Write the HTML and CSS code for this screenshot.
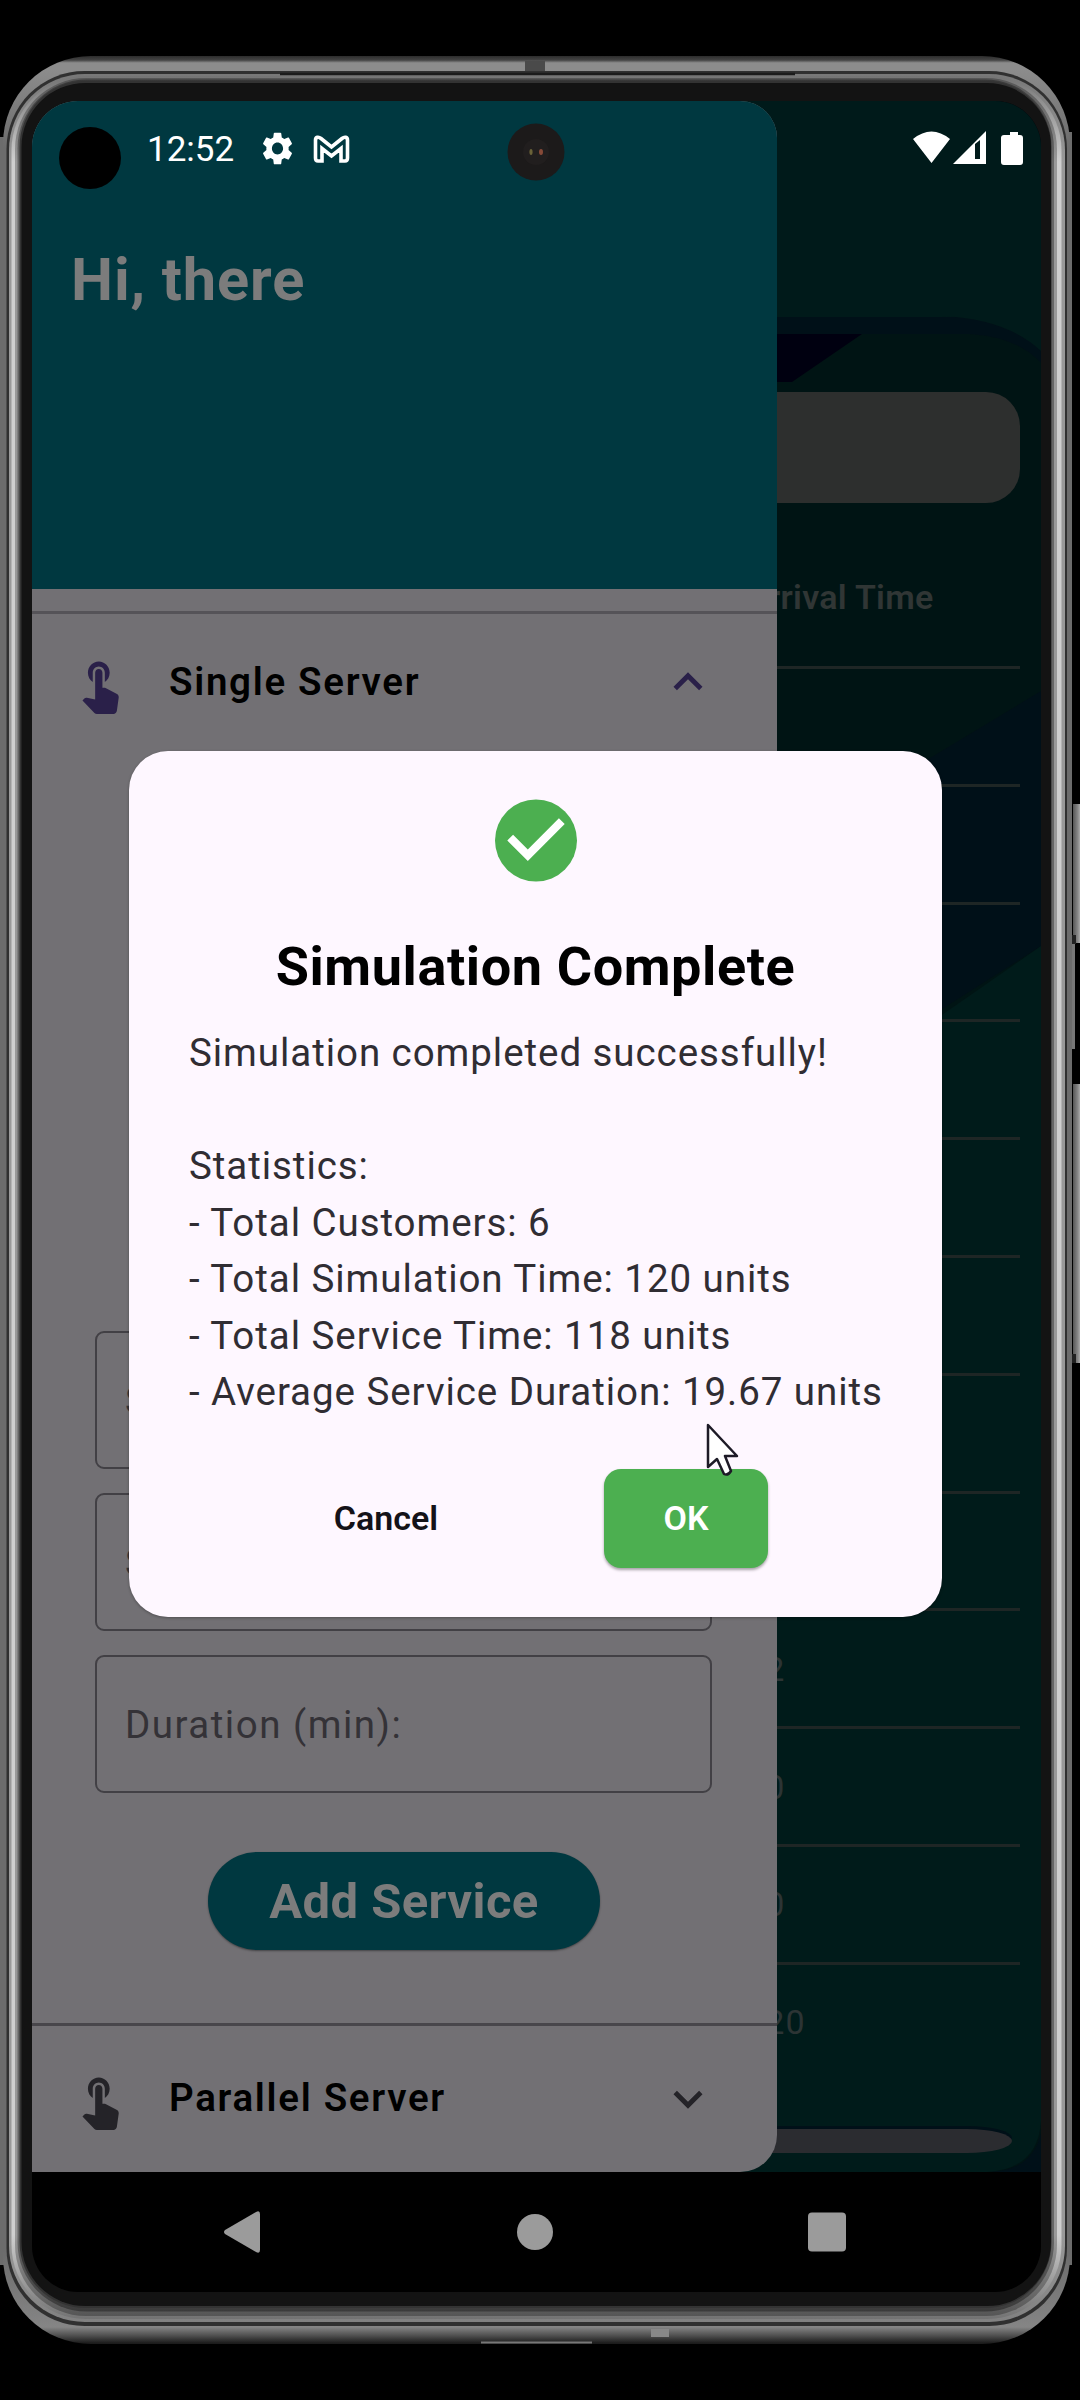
FILE: index.html
```
<!DOCTYPE html>
<html lang="en">
<head>
<meta charset="utf-8">
<title>Simulation</title>
<link rel="stylesheet" href="styles.css">
</head>
<body>
<div class="device">
  <svg class="frame" viewBox="0 0 1080 2400" aria-hidden="true">
    <defs>
      <linearGradient id="outer" gradientUnits="userSpaceOnUse" x1="0" y1="56" x2="0" y2="2343">
        <stop offset="0" stop-color="#2c2c2c"/><stop offset=".0018" stop-color="#444"/><stop offset=".003" stop-color="#8c8c8c"/><stop offset=".006" stop-color="#8c8c8c"/><stop offset=".04" stop-color="#6c6c6c"/>
        <stop offset=".96" stop-color="#6c6c6c"/><stop offset=".993" stop-color="#858585"/><stop offset=".997" stop-color="#4c4c4c"/><stop offset="1" stop-color="#1c1c1c"/>
      </linearGradient>
      <linearGradient id="g1" gradientUnits="userSpaceOnUse" x1="0" y1="72" x2="0" y2="2325"><stop offset="0" stop-color="#777"/><stop offset=".04" stop-color="#999"/><stop offset=".96" stop-color="#999"/><stop offset="1" stop-color="#808080"/></linearGradient>
      <linearGradient id="g2" gradientUnits="userSpaceOnUse" x1="0" y1="72" x2="0" y2="2325"><stop offset="0" stop-color="#707070"/><stop offset=".04" stop-color="#cfcfcf"/><stop offset=".96" stop-color="#cfcfcf"/><stop offset="1" stop-color="#6c6c6c"/></linearGradient>
      <linearGradient id="g3" gradientUnits="userSpaceOnUse" x1="0" y1="72" x2="0" y2="2325"><stop offset="0" stop-color="#505050"/><stop offset=".04" stop-color="#999"/><stop offset=".96" stop-color="#999"/><stop offset="1" stop-color="#4e4e4e"/></linearGradient>
      <linearGradient id="g4" gradientUnits="userSpaceOnUse" x1="0" y1="72" x2="0" y2="2325"><stop offset="0" stop-color="#343434"/><stop offset=".04" stop-color="#666"/><stop offset=".96" stop-color="#666"/><stop offset="1" stop-color="#333"/></linearGradient>
      <linearGradient id="key" x1="0" y1="0" x2="1" y2="0"><stop offset="0" stop-color="#555"/><stop offset=".6" stop-color="#888"/><stop offset="1" stop-color="#bbb"/></linearGradient>
    </defs>
    <rect x="1073" y="804" width="8" height="139" fill="url(#key)"/>
    <rect x="1071" y="943" width="4" height="106" fill="#777"/>
    <rect x="1073" y="1084" width="8" height="279" fill="url(#key)"/>
    <path d="M1070 935h6v9h-6zM1070 1354h6v9h-6z" fill="#222"/>
    <path d="M0 137H12V2265H0zM1060 132H1072V2265H1060z" fill="#6c6c6c"/>
    <rect x="3" y="56" width="1067" height="2288" rx="88" fill="url(#outer)"/>
    <rect x="6.500" y="71" width="1060.500" height="2255" rx="78" fill="#303030"/>
    <rect x="525" y="61" width="20" height="10" fill="#4a4a4a"/>
    <rect x="9" y="74" width="1056" height="2248" rx="76" fill="url(#g1)"/>
    <rect x="11.500" y="76" width="1050" height="2243" rx="74" fill="url(#g2)"/>
    <rect x="15" y="78" width="1042" height="2238" rx="71" fill="url(#g3)"/>
    <rect x="17.500" y="79.500" width="1036.500" height="2232" rx="69" fill="url(#g4)"/>
    <rect x="19.500" y="81" width="1032" height="2227" rx="66" fill="#333"/>
    <rect x="21.500" y="83" width="1029.500" height="2223" rx="64" fill="#131313"/>
    <path d="M280 74h515" stroke="#1b1b1b" stroke-width="2.500"/>
    <path d="M481 2342.500h111" stroke="#777" stroke-width="2"/>
    <rect x="651" y="2329" width="18" height="8" fill="#888"/>
  </svg>

  <div class="screen">
    <main class="app">
      <svg class="backdrop" viewBox="0 0 1009 2071" aria-hidden="true">
        <rect width="1009" height="2071" fill="#001018"/>
        <rect width="1009" height="216" fill="#001a1a"/>
        <path d="M850 215H910Q975 218 1009 250V215z" fill="#001a1a"/>
        <path d="M0 233H938Q985 236 1009 262V2032Q1000 2071 955 2071H0z" fill="#001414"/>
        <path d="M740 233H830L760 281H740z" fill="#000010"/>
        <path d="M1009 590L860 680V940L1009 845z" fill="#001018"/>
        <path d="M0 1060H700L1009 845V2020Q1006 2068 955 2071H0z" fill="#001b1a"/>
      </svg>
      <div class="search"></div>
      <div class="table">
        <div class="cell head">Arrival Time</div>
        <div class="cell"></div><div class="cell"></div><div class="cell"></div><div class="cell"></div>
        <div class="cell"></div><div class="cell"></div><div class="cell"></div><div class="cell"></div>
        <div class="cell">72</div>
        <div class="cell">80</div>
        <div class="cell">90</div>
        <div class="cell">120</div>
      </div>
      <div class="scroller"></div>
    </main>

    <aside class="drawer">
      <header class="greeting">Hi, there</header>
      <div class="tile tile-open">
        <svg class="touch" viewBox="0 0 24 24" preserveAspectRatio="none"><path d="M9 11.240V7.500C9 6.120 10.120 5 11.500 5S14 6.120 14 7.500v3.740c1.210-.81 2-2.180 2-3.740C16 5.010 13.990 3 11.500 3S7 5.010 7 7.500c0 1.560.79 2.930 2 3.740zm9.840 4.630l-4.540-2.260c-.17-.07-.35-.11-.54-.11H13v-6c0-.83-.67-1.500-1.500-1.500S10 6.670 10 7.500v10.740l-3.430-.72c-.08-.01-.15-.03-.24-.03-.31 0-.59.13-.79.33l-.79.8 4.940 4.940c.27.27.65.44 1.060.44h6.790c.75 0 1.330-.55 1.440-1.280l.75-5.270c.01-.07.02-.14.02-.2 0-.62-.38-1.160-.91-1.380z"/></svg>
        <span class="tile-name">Single Server</span>
        <svg class="chevron" viewBox="0 0 24 24"><path d="M12 8l-6 6 1.410 1.410L12 10.830l4.590 4.580L18 14z"/></svg>
      </div>
      <div class="fields">
        <div class="field">S</div>
        <div class="field">S</div>
        <div class="field">Duration (min):</div>
      </div>
      <button class="add">Add Service</button>
      <div class="tile tile-closed">
        <svg class="touch" viewBox="0 0 24 24" preserveAspectRatio="none"><path d="M9 11.240V7.500C9 6.120 10.120 5 11.500 5S14 6.120 14 7.500v3.740c1.210-.81 2-2.180 2-3.740C16 5.010 13.990 3 11.500 3S7 5.010 7 7.500c0 1.560.79 2.930 2 3.740zm9.840 4.630l-4.540-2.260c-.17-.07-.35-.11-.54-.11H13v-6c0-.83-.67-1.500-1.500-1.500S10 6.670 10 7.500v10.740l-3.430-.72c-.08-.01-.15-.03-.24-.03-.31 0-.59.13-.79.33l-.79.8 4.940 4.940c.27.27.65.44 1.060.44h6.790c.75 0 1.330-.55 1.440-1.280l.75-5.270c.01-.07.02-.14.02-.2 0-.62-.38-1.160-.91-1.380z"/></svg>
        <span class="tile-name">Parallel Server</span>
        <svg class="chevron" viewBox="0 0 24 24"><path d="M16.590 8.590L12 13.170 7.410 8.590 6 10l6 6 6-6z"/></svg>
      </div>
    </aside>

    <div class="status">
      <span class="cutout"></span>
      <span class="clock">12:52</span>
      <svg class="gear" viewBox="2 2 20 20" preserveAspectRatio="none"><path d="M19.140 12.940c.04-.3.060-.61.060-.94 0-.32-.02-.64-.07-.94l2.030-1.580c.18-.14.23-.41.12-.61l-1.920-3.320c-.12-.22-.37-.29-.59-.22l-2.390.96c-.5-.38-1.030-.7-1.620-.94l-.36-2.540c-.04-.24-.24-.41-.48-.41h-3.840c-.24 0-.43.17-.47.41l-.36 2.540c-.59.24-1.130.57-1.620.94l-2.390-.96c-.22-.08-.47 0-.59.22L2.740 8.870c-.12.21-.08.47.12.61l2.030 1.580c-.05.3-.09.63-.09.94s.02.64.07.94l-2.030 1.580c-.18.14-.23.41-.12.61l1.920 3.320c.12.22.37.29.59.22l2.390-.96c.5.38 1.030.7 1.620.94l.36 2.540c.05.24.24.41.48.41h3.840c.24 0 .44-.17.47-.41l.36-2.540c.59-.24 1.130-.56 1.620-.94l2.390.96c.22.08.47 0 .59-.22l1.920-3.320c.12-.22.07-.47-.12-.61l-2.010-1.580zM12 15.600c-1.980 0-3.600-1.620-3.600-3.600s1.620-3.600 3.600-3.600 3.600 1.620 3.600 3.600-1.620 3.600-3.600 3.600z"/></svg>
      <svg class="mail" viewBox="0 0 37 28"><path d="M2.500 23V5C2.500 2 5.500 1.500 8 3.500L18.500 12 29 3.500C31.500 1.500 34.500 2 34.500 5V23Q34.500 26 32 26H28V13.500L18.500 21 9 13.500V26H5Q2.500 26 2.500 23z" fill="none" stroke="#fff" stroke-width="3.600"/></svg>
      <svg class="camera" viewBox="0 0 58 58"><circle cx="29" cy="29" r="28.500" fill="#1c1a1a"/><circle cx="29" cy="29" r="13" fill="#211e1e"/><ellipse cx="24" cy="29" rx="1.600" ry="3" fill="#6a6238"/><ellipse cx="34" cy="29" rx="2" ry="3" fill="#864a38"/></svg>
      <svg class="signals" viewBox="0 0 110 34"><path d="M0 8Q18.500-7 37 8L18.500 32zM40 33L73 0V33z" fill="#fff"/><path d="M62 13l5-4v19h-5z" fill="#001a1a"/><path d="M92 4h5V1h8v3h2q3 0 3 3v24q0 3-3 3H91q-3 0-3-3V7q0-3 3-3z" fill="#fff"/></svg>
    </div>

    <section class="dialog">
      <svg class="done" viewBox="2 2 20 20"><circle cx="12" cy="12" r="10" fill="#4caf50"/><path d="M10 17l-5-5 1.410-1.410L10 14.170l7.590-7.590L19 8z" fill="#fff"/></svg>
      <h1>Simulation Complete</h1>
      <p>Simulation completed successfully!

Statistics:
- Total Customers: 6
- Total Simulation Time: 120 units
- Total Service Time: 118 units
- Average Service Duration: 19.67 units</p>
      <div class="actions">
        <button class="cancel">Cancel</button>
        <button class="ok">OK</button>
      </div>
    </section>

    <nav class="system">
      <svg viewBox="0 0 40 44"><path d="M3 20L34 2Q38 0 38 4V40Q38 44 34 42L3 24Q1 22 3 20z"/></svg>
      <svg viewBox="0 0 40 44"><circle cx="20" cy="22" r="18"/></svg>
      <svg viewBox="0 0 40 44"><rect x="0" y="2.500" width="38" height="39" rx="4"/></svg>
    </nav>
  </div>

  <svg class="pointer" viewBox="0 0 34 54"><path d="M2 2V44L11 36 18 51Q22 53 25 48L19 33H31z" fill="#fff" stroke="#1d1a26" stroke-width="2.500" stroke-linejoin="round"/></svg>
</div>
</body>
</html>
```
FILE: styles.css
```
* { box-sizing: border-box; }
body { margin: 0; background: #000; font-family: Roboto, sans-serif; }
button { border: 0; padding: 0; font-family: inherit; }
svg { display: block; }

.device { position: relative; width: 1080px; height: 2400px; padding: 101px 39px 0 32px; overflow: hidden; }
.frame { position: absolute; inset: 0; width: 1080px; height: 2400px; }

.screen { position: relative; width: 1009px; height: 2191px; border-radius: 46px; overflow: hidden; background: #000; display: flex; flex-direction: column; }

.app { position: relative; height: 2071px; flex: none; display: flex; flex-direction: column; padding: 291px 21px 0 0; }
.backdrop { position: absolute; inset: 0; width: 1009px; height: 2071px; }
.search { position: relative; height: 111px; border-radius: 34px; background: #2d2f2e; flex: none; }
.table { position: relative; margin-top: 51px; display: flex; flex-direction: column; }
.cell { height: 117.800px; padding-left: 713px; display: flex; align-items: center; font-size: 34px; letter-spacing: 1.200px; color: #2c3434; border-bottom: 3px solid #1e2625; }
.cell.head { font-weight: 600; height: 115px; padding-bottom: 26px; letter-spacing: .3px; color: #303635; }
.cell:last-child { border-bottom: 0; padding-bottom: 4px; }
.scroller { position: absolute; left: 0; top: 2028px; width: 980px; height: 24px; background: #2b2c30; border-radius: 0 45px 45px 0 / 0 12px 12px 0; box-shadow: 0 -3px #001018; }

.drawer { position: absolute; left: 0; top: 0; width: 744.500px; height: 2071px; background: #727074; border-radius: 0 37px 37px 0; overflow: hidden; display: flex; flex-direction: column; }
.greeting { height: 488px; background: #003840; color: #7c7c7c; font-size: 59.500px; letter-spacing: .9px; font-weight: 700; line-height: 68px; padding: 145px 0 0 39px; flex: none; }
.tile { display: flex; align-items: center; border-top: 3px solid #555358; padding: 0 60px 0 39px; flex: none; }
.tile-open { margin-top: 22px; height: 138px; fill: #2a2049; }
.tile-closed { margin-top: 73px; height: 149px; border-color: #48464b; fill: #242328; }
.touch { width: 58px; height: 60px; }
.tile-open .touch { margin-top: 5px; }
.tile-closed .touch { margin-top: 2px; }
.tile-name { margin-left: 40px; flex: 1; font-size: 38.500px; font-weight: 600; letter-spacing: 1.700px; color: #000; }
.tile-open .tile-name { margin-top: -1px; }
.tile-closed .tile-name { margin-top: -4px; }
.chevron { width: 58px; height: 58px; }
.fields { margin: 582px 65px 0 63px; display: flex; flex-direction: column; gap: 24px; }
.field { height: 138px; border: 2.500px solid #424045; border-radius: 9px; padding-left: 28px; display: flex; align-items: center; font-size: 38.500px; letter-spacing: 1.500px; color: #343237; }
.add { align-self: flex-start; margin: 59px 0 0 176px; width: 392px; height: 98px; border-radius: 49px; background: #003840; color: #7c7c7c; font-size: 49px; letter-spacing: .4px; font-weight: 700; box-shadow: 0 1px 2px rgba(0,0,0,.4); flex: none; }

.status { position: absolute; left: 0; right: 0; top: 0; height: 100px; display: grid; grid-template-columns: 27px 62px 26px 115px 31px 20px 37px 157px 58px 348px 110px; align-items: center; }
.cutout { grid-column: 2; height: 62px; border-radius: 50%; background: #000; margin-top: 14px; }
.clock { grid-column: 4; color: #fff; font-size: 35px; line-height: 40px; margin-top: -3px; }
.gear { grid-column: 5; width: 31px; height: 33px; fill: #fff; margin-top: -5px; }
.mail { grid-column: 7; width: 37px; height: 28px; margin-top: -5px; }
.camera { grid-column: 9; width: 58px; height: 58px; margin-top: 2px; }
.signals { grid-column: 11; width: 110px; height: 34px; margin-top: -6px; }

.dialog { position: absolute; left: 97px; top: 650px; width: 813px; height: 866px; border-radius: 39px; background: #fef7ff; display: flex; flex-direction: column; align-items: center; padding-top: 48px; box-shadow: 0 1px 3px rgba(0,0,0,.3); }
.done { width: 82px; height: 83px; flex: none; }
h1 { margin: 51px 0 0; font-size: 54px; letter-spacing: .6px; line-height: 68px; font-weight: 700; color: #000; white-space: nowrap; }
p { margin: 24px 0 0; width: 693px; font-size: 38.500px; line-height: 56.500px; letter-spacing: .940px; color: #302d33; white-space: pre; }
.actions { display: flex; align-self: stretch; padding-left: 165px; margin-top: 48px; }
.actions button { height: 99px; font-size: 34px; font-weight: 600; background: none; }
.actions .cancel { width: 184px; color: #141218; }
.actions .ok { margin-left: 126px; width: 164px; border-radius: 17px; background: #4caf50; color: #fff; box-shadow: 0 2px 3px rgba(0,0,0,.35); }

.system { flex: 1; display: flex; padding: 38px 0 0 190px; gap: 253px; fill: #9b9b9b; }
.system svg { width: 40px; height: 44px; flex: none; }

.pointer { position: absolute; left: 706px; top: 1423px; width: 34px; height: 54px; }
```
